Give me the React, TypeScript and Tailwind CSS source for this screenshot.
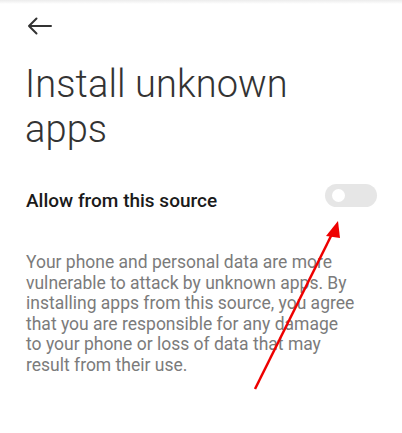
import React from "react";

export default function App() {
  return (
    <div
      className="relative w-[402px] h-[433px] bg-white overflow-hidden"
      style={{ fontFamily: "Roboto, 'Noto Sans', sans-serif" }}
    >
      {/* status shadow strip */}
      <div className="h-[4px] bg-gradient-to-b from-[#ececec] to-white" />

      {/* Header */}
      <div className="pl-[27px] pt-[13px] h-[58px]">
        <svg width="25" height="18" viewBox="0 0 25 18" fill="none">
          <path d="M24 9H2M9.5 1.5L2 9l7.5 7.5" stroke="#333" strokeWidth="2" strokeLinecap="round" strokeLinejoin="round" />
        </svg>
      </div>

      {/* Title */}
      <h1 className="px-[25px] text-[38px] leading-[45px] font-light text-[#333] tracking-[0.1px]">
        Install unknown apps
      </h1>

      {/* Toggle row */}
      <div className="mt-[37px] px-[26px] flex items-start justify-between">
        <span className="text-[19px] leading-[24px] font-medium text-[#1a1a1a]">
          Allow from this source
        </span>
        <div className="mt-[-5px] mr-[-1px] w-[52px] h-[23px] rounded-full bg-[#e6e6e6] flex items-center pl-[7px]">
          <div className="w-[13px] h-[13px] rounded-full bg-white" />
        </div>
      </div>

      {/* Description */}
      <p className="mt-[39px] pl-[26px] pr-[46px] text-[17.5px] leading-[20.5px] text-[#7b7b7b]">
        Your phone and personal data are more vulnerable to attack by unknown apps. By installing apps from this source, you agree that you are responsible for any damage to your phone or loss of data that may result from their use.
      </p>

      {/* Red annotation arrow */}
      <svg className="absolute left-0 top-0" width="402" height="433" viewBox="0 0 402 433">
        <line x1="255" y1="389" x2="333" y2="232" stroke="#e00" strokeWidth="2.5" />
        <polygon points="338,221 326,236 340,238" fill="#e00" />
      </svg>
    </div>
  );
}
